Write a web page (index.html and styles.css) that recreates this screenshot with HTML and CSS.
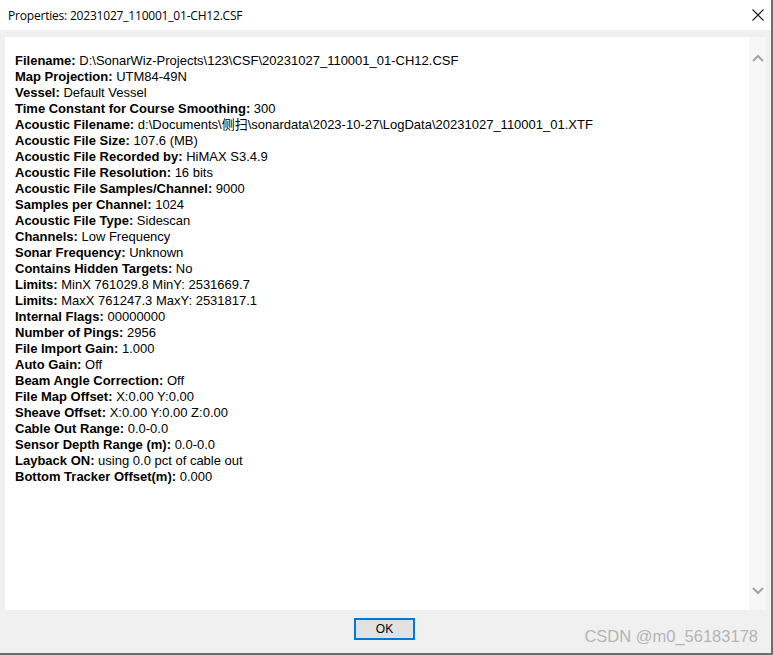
FILE: index.html
```html
<!DOCTYPE html>
<html lang="en">
<head>
    <meta charset="UTF-8">
    <title>Properties: 20231027_110001_01-CH12.CSF</title>
    <link rel="stylesheet" href="styles.css">
</head>
<body>
    <div class="window">
        <div class="titlebar">
            <span class="title">Properties: 20231027_110001_01-CH12.CSF</span>
            <span class="close">
                <svg width="12" height="12" viewBox="0 0 12 12"><path d="M0.5 0.5 L11.5 11.5 M11.5 0.5 L0.5 11.5" stroke="#1a1a1a" stroke-width="1.1" fill="none"/></svg>
            </span>
        </div>
        <div class="client">
            <div class="panel">
                <div class="info">
                    <div><b>Filename:</b> D:\SonarWiz-Projects\123\CSF\20231027_110001_01-CH12.CSF</div>
                    <div><b>Map Projection:</b> UTM84-49N</div>
                    <div><b>Vessel:</b> Default Vessel</div>
                    <div><b>Time Constant for Course Smoothing:</b> 300</div>
                    <div><b>Acoustic Filename:</b> d:\Documents\侧扫\sonardata\2023-10-27\LogData\20231027_110001_01.XTF</div>
                    <div><b>Acoustic File Size:</b> 107.6 (MB)</div>
                    <div><b>Acoustic File Recorded by:</b> HiMAX S3.4.9</div>
                    <div><b>Acoustic File Resolution:</b> 16 bits</div>
                    <div><b>Acoustic File Samples/Channel:</b> 9000</div>
                    <div><b>Samples per Channel:</b> 1024</div>
                    <div><b>Acoustic File Type:</b> Sidescan</div>
                    <div><b>Channels:</b> Low Frequency</div>
                    <div><b>Sonar Frequency:</b> Unknown</div>
                    <div><b>Contains Hidden Targets:</b> No</div>
                    <div><b>Limits:</b> MinX 761029.8 MinY: 2531669.7</div>
                    <div><b>Limits:</b> MaxX 761247.3 MaxY: 2531817.1</div>
                    <div><b>Internal Flags:</b> 00000000</div>
                    <div><b>Number of Pings:</b> 2956</div>
                    <div><b>File Import Gain:</b> 1.000</div>
                    <div><b>Auto Gain:</b> Off</div>
                    <div><b>Beam Angle Correction:</b> Off</div>
                    <div><b>File Map Offset:</b> X:0.00 Y:0.00</div>
                    <div><b>Sheave Offset:</b> X:0.00 Y:0.00 Z:0.00</div>
                    <div><b>Cable Out Range:</b> 0.0-0.0</div>
                    <div><b>Sensor Depth Range (m):</b> 0.0-0.0</div>
                    <div><b>Layback ON:</b> using 0.0 pct of cable out</div>
                    <div><b>Bottom Tracker Offset(m):</b> 0.000</div>
                </div>
                <div class="scrollbar">
                    <svg width="12" height="8" viewBox="0 0 12 8"><path d="M1 7 L6 2 L11 7" stroke="#a3a3a3" stroke-width="2" fill="none"/></svg>
                    <svg width="12" height="8" viewBox="0 0 12 8"><path d="M1 1 L6 6 L11 1" stroke="#a3a3a3" stroke-width="2" fill="none"/></svg>
                </div>
            </div>
            <div class="footer">
                <button class="ok">OK</button>
                <span class="watermark">CSDN @m0_56183178</span>
            </div>
        </div>
    </div>
</body>
</html>
```

FILE: styles.css
```css
html, body {
    margin: 0;
    padding: 0;
}
body {
    width: 773px;
    height: 655px;
    overflow: hidden;
    background: #f0f0f0;
}
.window {
    width: 771px;
    height: 653px;
    border-right: 2px solid #6e6e6e;
    border-bottom: 2px solid #6e6e6e;
    display: flex;
    flex-direction: column;
    background: #f0f0f0;
}
.titlebar {
    height: 30px;
    background: #fff;
    display: flex;
    align-items: center;
    justify-content: space-between;
    padding: 0 7px 0 8px;
    flex-shrink: 0;
}
.title {
    font-family: "Open Sans", "Noto Sans", sans-serif;
    font-size: 12px;
    color: #000;
    letter-spacing: -0.2px;
}
.close {
    display: flex;
    width: 12px;
    height: 12px;
}
.client {
    flex: 1;
    display: flex;
    flex-direction: column;
    padding: 7px 5px 0 5px;
}
.panel {
    height: 573px;
    display: flex;
    background: #fff;
}
.info {
    flex: 1;
    padding: 16px 0 0 10px;
    font-family: "Liberation Sans", Arial, "Noto Sans CJK SC", sans-serif;
    font-size: 13px;
    line-height: 16px;
    color: #000;
}
.info b {
    font-weight: bold;
}
.scrollbar {
    width: 17px;
    background: #f7f7f7;
    display: flex;
    flex-direction: column;
    justify-content: space-between;
    align-items: center;
    padding: 17px 0 15px;
    box-sizing: border-box;
}
.footer {
    position: relative;
    height: 43px;
    display: flex;
    justify-content: center;
    align-items: flex-start;
    padding-top: 8px;
    box-sizing: border-box;
}
.ok {
    width: 61px;
    height: 22px;
    margin-left: -2px;
    background: #e1e1e1;
    border: 2px solid #0078d7;
    font-family: "Liberation Sans", Arial, sans-serif;
    font-size: 12px;
    color: #000;
    padding: 0;
}
.watermark {
    position: absolute;
    right: 8px;
    top: 17px;
    font-family: "Liberation Sans", Arial, sans-serif;
    font-size: 16.5px;
    color: #b5b5b5;
}
```
